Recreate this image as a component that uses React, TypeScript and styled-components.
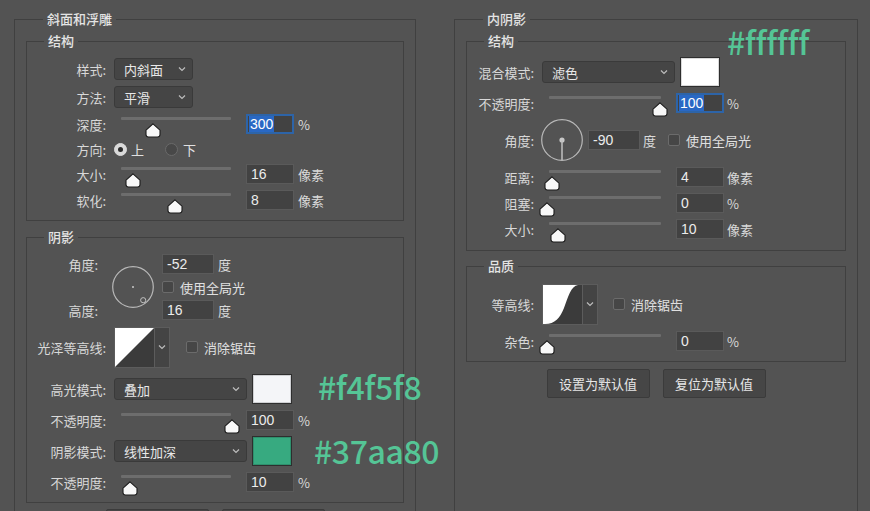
import styled, { createGlobalStyle } from 'styled-components';

const GlobalStyle = createGlobalStyle`
  html, body {
    margin: 0;
    padding: 0;
    width: 870px;
    height: 511px;
    overflow: hidden;
    background: #535353;
  }
`;

const CJK = `"Noto Sans CJK SC", sans-serif`;
const NUM = `"Liberation Sans", "Noto Sans CJK SC", sans-serif`;

// 页面
const Page = styled.div`
  position: relative;
  display: flex;
  gap: 38px;
  height: 511px;
  padding: 11px 0 0 14px;
  box-sizing: border-box;
  overflow: hidden;
  background: #535353;
  font-family: ${CJK};
  color: #d2d2d2;
`;

const Panel = styled.fieldset<{ $w: number }>`
  width: ${(p) => p.$w}px;
  height: 540px;
  box-sizing: border-box;
  flex: none;
  margin: 0;
  padding: 0 11px;
  min-width: 0;
  border: 1px solid #404040;
`;

const Legend = styled.legend`
  margin-left: 17px;
  padding: 0 4px;
  font-size: 13px;
  line-height: 16px;
  height: 16px;
  font-weight: 500;
  color: #e4e4e4;
`;

const Section = styled.fieldset<{ $pt: number; $pb: number; $mt: number }>`
  margin: ${(p) => p.$mt}px 0 0;
  padding: ${(p) => p.$pt}px 0 ${(p) => p.$pb}px;
  min-width: 0;
  border: 1px solid #404040;
  display: flex;
  flex-direction: column;
  gap: 6px;
`;

const Row = styled.div<{ $h: number }>`
  display: flex;
  align-items: center;
  height: ${(p) => p.$h}px;
`;

const Label = styled.span<{ $w: number }>`
  width: ${(p) => p.$w}px;
  flex: none;
  margin-right: 8px;
  text-align: right;
  font-size: 13px;
  line-height: 1;
  white-space: nowrap;
  color: #d8d8d8;
`;

const Text = styled.span<{ $ml?: number }>`
  margin-left: ${(p) => p.$ml ?? 0}px;
  font-size: 13px;
  line-height: 1;
  white-space: nowrap;
  color: #e0e0e0;
`;

// 下拉框
const SelectBox = styled.div<{ $w: number; $ml?: number }>`
  width: ${(p) => p.$w}px;
  height: 22px;
  margin-left: ${(p) => p.$ml ?? 0}px;
  box-sizing: border-box;
  flex: none;
  display: flex;
  align-items: center;
  justify-content: space-between;
  padding: 0 6px 0 9px;
  background: #454545;
  border: 1px solid #3a3a3a;
  border-radius: 3px;
  font-size: 13px;
  color: #e8e8e8;
`;

const Chevron = () => (
  <svg width="8" height="6" viewBox="0 0 8 6">
    <polyline points="1,1.5 4,4.5 7,1.5" fill="none" stroke="#bdbdbd" strokeWidth="1.2" />
  </svg>
);

const Select = ({ w, value, ml }: { w: number; value: string; ml?: number }) => (
  <SelectBox $w={w} $ml={ml}>
    <span>{value}</span>
    <Chevron />
  </SelectBox>
);

// 数值框
const Field = styled.div<{ $w: number; $ml?: number; $active?: boolean }>`
  width: ${(p) => p.$w}px;
  height: 20px;
  margin-left: ${(p) => p.$ml ?? 0}px;
  box-sizing: border-box;
  flex: none;
  display: flex;
  align-items: center;
  padding-left: ${(p) => (p.$active ? 1 : 3)}px;
  background: #424242;
  border: ${(p) => (p.$active ? '2px solid #2d64a8' : '1px solid #5a5a5a')};
  font-family: ${NUM};
  font-size: 14px;
  color: #ececec;
`;

const Value = styled.span<{ $sel?: boolean }>`
  padding: 0 1px;
  line-height: 16px;
  background: ${(p) => (p.$sel ? '#2968c4' : 'transparent')};
  color: ${(p) => (p.$sel ? '#ffffff' : 'inherit')};
`;

const Unit = styled.span<{ $ml?: number }>`
  margin-left: ${(p) => p.$ml ?? 4}px;
  font-size: 13px;
  line-height: 1;
  white-space: nowrap;
  color: #dadada;
`;

// 滑块
const SliderBox = styled.div<{ $w: number }>`
  position: relative;
  width: ${(p) => p.$w}px;
  height: 20px;
  flex: none;
  align-self: flex-start;
`;

const Track = styled.div`
  margin: 3px 8px 0 7px;
  height: 3px;
  background: #6d6d6d;
  border-radius: 1px;
`;

const ThumbWrap = styled.div<{ $x: number }>`
  position: absolute;
  top: 5px;
  left: ${(p) => p.$x - 8}px;
  width: 16px;
  height: 15px;
`;

const Thumb = ({ x }: { x: number }) => (
  <ThumbWrap $x={x}>
    <svg width="16" height="15" viewBox="0 0 16 15">
      <path
        d="M8 0.8 L15 7.2 V11.6 Q15 14 12.6 14 H3.4 Q1 14 1 11.6 V7.2 Z"
        fill="#f8f8f8"
        stroke="#1c1c1c"
        strokeWidth="1.1"
      />
    </svg>
  </ThumbWrap>
);

const SliderRow = ({
  label,
  lw,
  sw,
  x,
  value,
  unit,
  active,
  um,
}: {
  label: string;
  lw: number;
  sw: number;
  x: number;
  value: string;
  unit: string;
  active?: boolean;
  um?: number;
}) => (
  <Row $h={20}>
    <Label $w={lw}>{label}</Label>
    <SliderBox $w={sw}>
      <Track />
      <Thumb x={x} />
    </SliderBox>
    <Field $w={48} $ml={7} $active={active}>
      <Value $sel={active}>{value}</Value>
    </Field>
    <Unit $ml={um}>{unit}</Unit>
  </Row>
);

// 单选 / 复选
const Radio = styled.span<{ $on?: boolean; $ml?: number }>`
  width: 13px;
  height: 13px;
  margin-left: ${(p) => p.$ml ?? 0}px;
  box-sizing: border-box;
  flex: none;
  border-radius: 50%;
  display: flex;
  align-items: center;
  justify-content: center;
  background: ${(p) => (p.$on ? '#dadada' : '#484848')};
  border: 1px solid ${(p) => (p.$on ? '#dadada' : '#6a6a6a')};
  &::after {
    content: '';
    width: 5px;
    height: 5px;
    border-radius: 50%;
    background: ${(p) => (p.$on ? '#2b2b2b' : 'transparent')};
  }
`;

const Check = styled.span`
  width: 12px;
  height: 12px;
  box-sizing: border-box;
  flex: none;
  border-radius: 2px;
  background: #464646;
  border: 1px solid #6b6b6b;
`;

const CheckWrap = styled.div<{ $ml?: number }>`
  display: flex;
  align-items: center;
  gap: 6px;
  margin-left: ${(p) => p.$ml ?? 0}px;
`;

const CheckItem = ({ text, ml }: { text: string; ml?: number }) => (
  <CheckWrap $ml={ml}>
    <Check />
    <Text>{text}</Text>
  </CheckWrap>
);

// 颜色块
const Swatch = styled.div<{ $c: string }>`
  width: 40px;
  height: 30px;
  margin-left: 5px;
  box-sizing: border-box;
  flex: none;
  background: ${(p) => p.$c};
  border: 1px solid #2e2e2e;
  box-shadow: inset 0 0 0 1px rgba(0, 0, 0, 0.15);
`;

const Note = styled.span<{ $dx: number; $dy: number }>`
  margin-left: ${(p) => p.$dx}px;
  align-self: flex-start;
  margin-top: ${(p) => p.$dy}px;
  font-family: ${CJK};
  font-weight: 500;
  font-size: 32px;
  line-height: 1;
  letter-spacing: -0.4px;
  color: #55c596;
  white-space: nowrap;
`;

const TopNote = styled(Note)`
  position: absolute;
  left: 727px;
  top: 25px;
  margin: 0;
`;

// 角度
const AngleGrid = styled.div<{ $lw: number }>`
  display: grid;
  grid-template-columns: ${(p) => p.$lw}px 40px auto;
  grid-template-rows: 20px 26px 20px;
  column-gap: 8px;
  align-items: center;
`;

const GridCell = styled.div<{ $r: string; $c: number }>`
  grid-row: ${(p) => p.$r};
  grid-column: ${(p) => p.$c};
  display: flex;
  align-items: center;
  justify-content: ${(p) => (p.$c === 1 ? 'flex-end' : 'flex-start')};
`;

const DialBox = styled.div<{ $ml?: number }>`
  width: 42px;
  height: 42px;
  flex: none;
  margin-left: ${(p) => p.$ml ?? 0}px;
`;

const Dial = ({ kind, ml }: { kind: 'dot' | 'line'; ml?: number }) => (
  <DialBox $ml={ml}>
    <svg width="42" height="42" viewBox="0 0 42 42">
      <circle cx="21" cy="21" r="20.3" fill="none" stroke="#b9b9b9" strokeWidth="1.2" />
      {kind === 'dot' ? (
        <>
          <circle cx="21" cy="21" r="1" fill="#c8c8c8" />
          <circle cx="31.2" cy="34.2" r="2.6" fill="none" stroke="#c0c0c0" strokeWidth="1" />
        </>
      ) : (
        <>
          <circle cx="21" cy="21" r="2.6" fill="#c8c8c8" />
          <line x1="21" y1="21" x2="21" y2="41" stroke="#c0c0c0" strokeWidth="1.5" />
        </>
      )}
    </svg>
  </DialBox>
);

// 等高线
const ContourBox = styled.div`
  display: flex;
  height: 41px;
  flex: none;
  border: 1px solid #5c5c5c;
  box-sizing: border-box;
  background: #3d3d3d;
`;

const ContourDrop = styled.div`
  width: 14px;
  display: flex;
  align-items: center;
  justify-content: center;
  border-left: 1px solid #5c5c5c;
  background: #444444;
`;

const Contour = ({ curve }: { curve: 'linear' | 'cone' }) => (
  <ContourBox>
    <svg width="39" height="39" viewBox="0 0 39 39">
      <rect width="39" height="39" fill="#3b3b3b" />
      {curve === 'linear' ? (
        <polygon points="0,0 39,0 0,39" fill="#ffffff" />
      ) : (
        <path d="M0 0 H35 C28 1 25 12 21 23 C17 33 12 39 2 39 H0 Z" fill="#ffffff" />
      )}
    </svg>
    <ContourDrop>
      <Chevron />
    </ContourDrop>
  </ContourBox>
);

// 按钮
const ButtonBar = styled.div<{ $mt: number }>`
  display: flex;
  justify-content: center;
  gap: 13px;
  margin-top: ${(p) => p.$mt}px;
`;

const Button = styled.button`
  width: 103px;
  height: 29px;
  padding: 0;
  box-sizing: border-box;
  background: #464646;
  border: 1px solid #3b3b3b;
  border-radius: 2px;
  font-family: ${CJK};
  font-size: 13px;
  color: #e6e6e6;
`;

const Buttons = ({ mt }: { mt: number }) => (
  <ButtonBar $mt={mt}>
    <Button>设置为默认值</Button>
    <Button>复位为默认值</Button>
  </ButtonBar>
);

const App = () => {
  return (
    <Page>
      <GlobalStyle />

      {/* 斜面和浮雕 */}
      <Panel $w={402}>
        <Legend>斜面和浮雕</Legend>
        <Section $mt={6} $pt={9} $pb={10}>
          <Legend>结构</Legend>
          <Row $h={22}>
            <Label $w={79}>样式:</Label>
            <Select w={79} value="内斜面" />
          </Row>
          <Row $h={22}>
            <Label $w={79}>方法:</Label>
            <Select w={79} value="平滑" />
          </Row>
          <SliderRow label="深度:" lw={79} sw={125} x={39} value="300" unit="%" active />
          <Row $h={18}>
            <Label $w={79}>方向:</Label>
            <Radio $on />
            <Text $ml={4}>上</Text>
            <Radio $ml={21} />
            <Text $ml={5}>下</Text>
          </Row>
          <SliderRow label="大小:" lw={79} sw={125} x={19} value="16" unit="像素" />
          <SliderRow label="软化:" lw={79} sw={125} x={61} value="8" unit="像素" />
        </Section>

        <Section $mt={8} $pt={9} $pb={10}>
          <Legend>阴影</Legend>
          <AngleGrid $lw={79}>
            <GridCell $r="1" $c={1}>
              <Label $w={79}>角度:</Label>
            </GridCell>
            <GridCell $r="3" $c={1}>
              <Label $w={79}>高度:</Label>
            </GridCell>
            <GridCell $r="1 / 4" $c={2}>
              <Dial kind="dot" ml={-2} />
            </GridCell>
            <GridCell $r="1" $c={3}>
              <Field $w={52}>
                <Value>-52</Value>
              </Field>
              <Unit>度</Unit>
            </GridCell>
            <GridCell $r="2" $c={3}>
              <CheckItem text="使用全局光" />
            </GridCell>
            <GridCell $r="3" $c={3}>
              <Field $w={52}>
                <Value>16</Value>
              </Field>
              <Unit>度</Unit>
            </GridCell>
          </AngleGrid>
          <Row $h={42}>
            <Label $w={79}>光泽等高线:</Label>
            <Contour curve="linear" />
            <CheckItem text="消除锯齿" ml={16} />
          </Row>
          <Row $h={30}>
            <Label $w={79}>高光模式:</Label>
            <Select w={133} value="叠加" />
            <Swatch $c="#f4f5f8" />
            <Note $dx={26} $dy={-4}>#f4f5f8</Note>
          </Row>
          <SliderRow label="不透明度:" lw={79} sw={125} x={118} value="100" unit="%" />
          <Row $h={30}>
            <Label $w={79}>阴影模式:</Label>
            <Select w={133} value="线性加深" />
            <Swatch $c="#37aa80" />
            <Note $dx={22} $dy={-2}>#37aa80</Note>
          </Row>
          <SliderRow label="不透明度:" lw={79} sw={125} x={16} value="10" unit="%" />
        </Section>
        <Buttons mt={6} />
      </Panel>

      {/* 内阴影 */}
      <Panel $w={404}>
        <Legend>内阴影</Legend>
        <Section $mt={6} $pt={8} $pb={11}>
          <Legend>结构</Legend>
          <Row $h={30}>
            <Label $w={67}>混合模式:</Label>
            <Select w={133} value="滤色" />
            <Swatch $c="#ffffff" />
          </Row>
          <SliderRow label="不透明度:" lw={67} sw={127} x={118} value="100" unit="%" active um={3} />
          <Row $h={42}>
            <Label $w={67}>角度:</Label>
            <Dial kind="line" ml={-1} />
            <Field $w={52} $ml={5}>
              <Value>-90</Value>
            </Field>
            <Unit $ml={3}>度</Unit>
            <CheckItem text="使用全局光" ml={12} />
          </Row>
          <SliderRow label="距离:" lw={67} sw={127} x={10} value="4" unit="像素" um={3} />
          <SliderRow label="阻塞:" lw={67} sw={127} x={5} value="0" unit="%" um={3} />
          <SliderRow label="大小:" lw={67} sw={127} x={16} value="10" unit="像素" um={3} />
        </Section>

        <Section $mt={7} $pt={9} $pb={10}>
          <Legend>品质</Legend>
          <Row $h={42}>
            <Label $w={67}>等高线:</Label>
            <Contour curve="cone" />
            <CheckItem text="消除锯齿" ml={15} />
          </Row>
          <SliderRow label="杂色:" lw={67} sw={127} x={5} value="0" unit="%" um={3} />
        </Section>
        <Buttons mt={7} />
      </Panel>

      <TopNote $dx={0} $dy={0}>#ffffff</TopNote>
    </Page>
  );
};

export default App;
